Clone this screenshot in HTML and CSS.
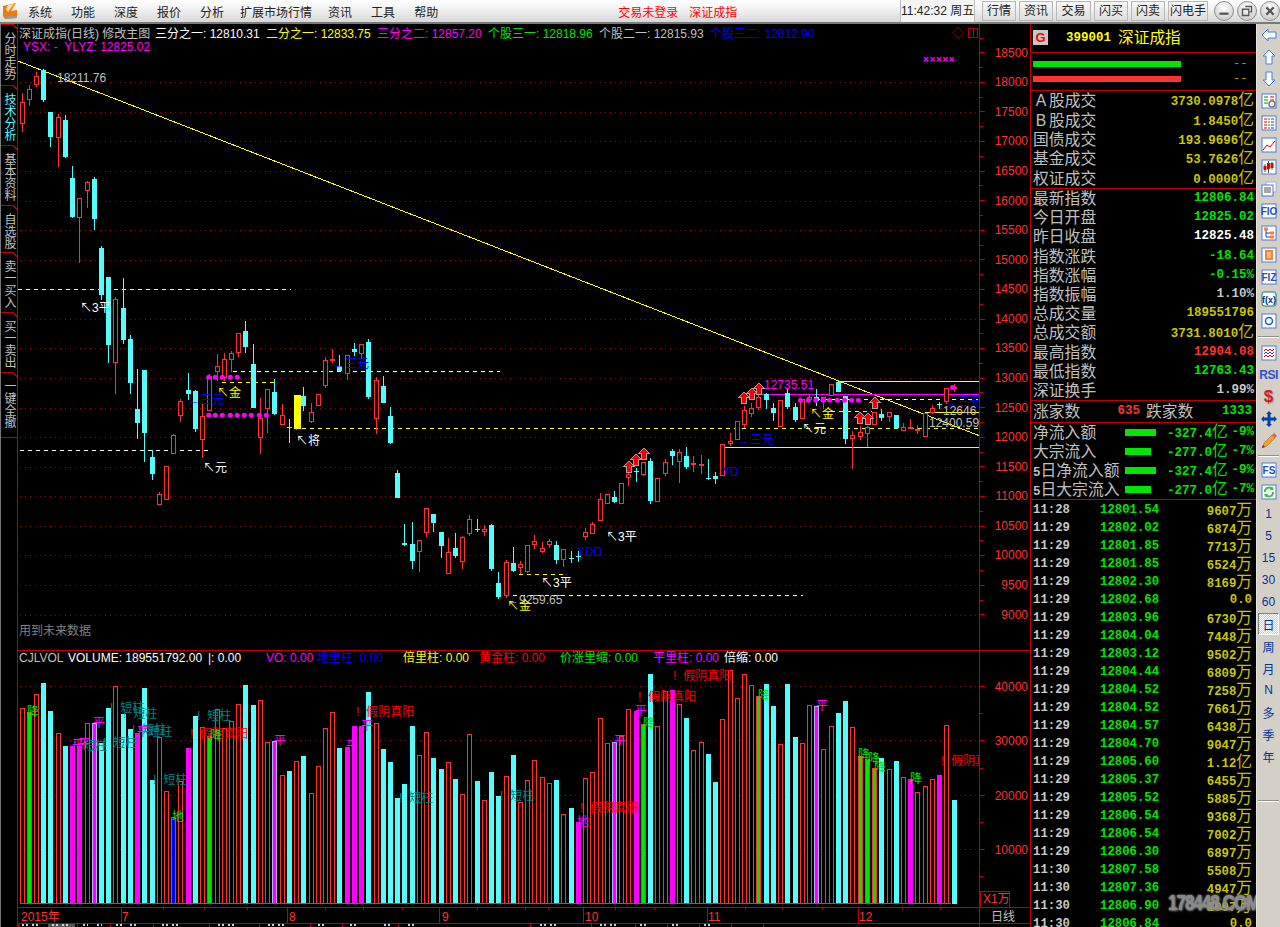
FILE: index.html
```html
<!DOCTYPE html>
<html lang="zh-CN">
<head>
<meta charset="utf-8">
<title>深证成指</title>
<link rel="stylesheet" href="styles.css">
</head>
<body>
<div class="app">
  <header class="topbar">
    <svg class="logo" viewBox="0 0 16 18"><path class="logo-o" d="M1 4 L14 1 L9 9 L15 8 L15 16 L3 17 L1 14 Z"/><path class="logo-w" d="M6 3 L12 2 L6 10 L4 7 Z"/><path class="logo-g" d="M3 17 L15 16 L15 14 L5 14 Z"/></svg>
    <nav class="menu">
      <span>系统</span><span>功能</span><span>深度</span><span>报价</span><span>分析</span><span class="wide">扩展市场行情</span><span>资讯</span><span>工具</span><span>帮助</span>
    </nav>
    <span class="login">交易未登录</span>
    <span class="login second">深证成指</span>
    <div class="topright">
      <span class="clock">11:42:32 周五</span>
      <span class="tbtn w34">行情</span><span class="tbtn w34">资讯</span><span class="tbtn w35">交易</span><span class="tbtn w34">闪买</span><span class="tbtn w34">闪卖</span><span class="tbtn w41">闪电手</span>
      <span class="winbtn"><svg viewBox="0 0 20 20"><path class="wb-i" d="M5 13 H15"/></svg></span>
      <span class="winbtn"><svg viewBox="0 0 20 20"><path class="wb-t" d="M8 5 H15 V11 H13 M5 8 H12 V15 H5 Z"/></svg></span>
      <span class="winbtn"><svg viewBox="0 0 20 20"><path class="wb-i" d="M6 6 L14 14 M14 6 L6 14"/></svg></span>
    </div>
  </header>

  <main class="main">
    <aside class="tabs">
      <div class="tab h61">分时走势</div>
      <div class="tab h60 active">技术分析</div>
      <div class="tab h60">基本资料</div>
      <div class="tab h47">自选股</div>
      <div class="tab h60">卖一买入</div>
      <div class="tab h60">买一卖出</div>
      <div class="tab h66">一键全撤</div>
    </aside>

    <section class="chart">
      <svg class="chart-svg" viewBox="18 23 1012 904" width="1012" height="904">
        <g id="grid"></g>
        <path class="trend" d="M18 60 L980 435"/>
        <path class="dash white" d="M20 449 H212 M233 370.5 H500 M497 594 H803 M800 398.5 H978"/>
        <path class="dash paleyellow" d="M18 288 H291"/>
        <path class="dash yellow" d="M222 381 H276 M302 427.5 H978 M519 573.5 H566 M831 410.5 H872"/>
        <path class="solid-y" d="M838 380.5 H979 M722 446.5 H979 M925 411.5 H979"/>
        <path class="solid-m" d="M760 393.5 H979"/>
        <g id="candles"></g>
        <g class="dots">
          <circle cx="208.7" cy="376.3" r="2.5"/><circle cx="215.3" cy="376.3" r="2.5"/><circle cx="222.3" cy="376.3" r="2.5"/><circle cx="230.3" cy="376.3" r="2.5"/><circle cx="237.3" cy="376.3" r="2.5"/>
          <circle cx="208.7" cy="414.3" r="2.5"/><circle cx="215.3" cy="414.3" r="2.5"/><circle cx="222.3" cy="414.3" r="2.5"/><circle cx="230.3" cy="414.3" r="2.5"/><circle cx="237.3" cy="414.3" r="2.5"/><circle cx="244.3" cy="414.3" r="2.5"/><circle cx="251.3" cy="414.3" r="2.5"/><circle cx="259.3" cy="414.3" r="2.5"/><circle cx="266.3" cy="414.3" r="2.5"/>
          <circle cx="800.5" cy="399.3" r="2.5"/><circle cx="808.3" cy="399.3" r="2.5"/><circle cx="815.8" cy="399.3" r="2.5"/><circle cx="822.9" cy="399.3" r="2.5"/><circle cx="829.6" cy="399.3" r="2.5"/><circle cx="837.4" cy="399.3" r="2.5"/><circle cx="844.5" cy="399.3" r="2.5"/><circle cx="851.6" cy="399.3" r="2.5"/><circle cx="858.4" cy="399.3" r="2.5"/>
          <circle cx="952.5" cy="386.5" r="2.5"/>
        </g>
        <defs><path id="up" d="M0 -6 L5 -1 L2.5 -1 L2.5 5 L-2.5 5 L-2.5 -1 L-5 -1 Z"/></defs>
        <g class="uparrows">
          <use href="#up" x="629" y="466"/><use href="#up" x="636" y="459"/><use href="#up" x="644" y="453"/>
          <use href="#up" x="744" y="397"/><use href="#up" x="752" y="393"/><use href="#up" x="759" y="388"/>
          <use href="#up" x="860" y="417"/><use href="#up" x="868" y="418"/><use href="#up" x="875" y="402"/>
        </g>

        <g class="t">
          <text class="gray" x="19" y="37">深证成指(日线) 修改主图</text>
          <text class="white" x="155" y="37">三分之一: 12810.31</text>
          <text class="yel" x="266" y="37">二分之一: 12833.75</text>
          <text class="mag" x="377" y="37">三分之二: 12857.20</text>
          <text class="grn" x="488" y="37">个股三一: 12818.96</text>
          <text class="gray" x="599" y="37">个股二一: 12815.93</text>
          <text class="blu" x="710" y="37">个股三二: 12812.90</text>
          <text class="mag" x="23" y="50">YSX: -&#160;&#160;YLYZ: 12825.02</text>
          <text class="mag small" x="923" y="62">×××××</text>
          <text class="redline" x="952" y="37">◇</text>
          <text class="gray" x="57" y="81">18211.76</text>
          <text class="white" x="80" y="311">↖3平</text>
          <text class="white" x="203" y="471">↖元</text>
          <text class="white" x="296" y="444">↖将</text>
          <text class="yel" x="217" y="396">↖金</text>
          <text class="blu" x="188" y="403">←三元</text>
          <text class="blu" x="333" y="367">←三元</text>
          <text class="white" x="606" y="540">↖3平</text>
          <text class="white" x="541" y="586">↖3平</text>
          <text class="blu" x="577" y="555">YDD</text>
          <text class="blu" x="722" y="475">YD</text>
          <text class="blu" x="738" y="443">←三元</text>
          <text class="mag" x="764" y="388">12735.51</text>
          <text class="yel" x="810" y="417">↖金</text>
          <text class="white" x="802" y="432">↖元</text>
          <text class="blu" x="946" y="405">←三元</text>
          <text class="gray" x="943" y="414">12646</text>
          <text class="gray" x="929" y="426">12400.59</text>
          <text class="gray" x="507" y="603">←9259.65</text>
          <text class="yel" x="507" y="609">↖金</text>
          <text class="dim" x="19" y="634">用到未来数据</text>

          <text class="gray" x="19" y="661">CJLVOL</text>
          <text class="white" x="68" y="661">VOLUME: 189551792.00</text>
          <text class="white" x="208" y="661">|: 0.00</text>
          <text class="mag" x="266" y="661">VO: 0.00</text>
          <text class="blu" x="317" y="661">地里柱: 0.00</text>
          <text class="yel" x="403" y="661">倍里柱: 0.00</text>
          <text class="redt" x="479" y="661">黄金柱: 0.00</text>
          <text class="grn" x="560" y="661">价涨里缩: 0.00</text>
          <text class="mag" x="653" y="661">平里柱: 0.00</text>
          <text class="white" x="724" y="661">倍缩: 0.00</text>
        </g>

        <g id="vol"></g>
        <path class="baseline" d="M20 902.5 H951"/>

        <g class="t vl">
          <text class="teal" x="110" y="711">! 短柱</text><text class="teal" x="123" y="717">! 短柱</text><text class="teal" x="73" y="749">! 短柱</text><text class="teal" x="103" y="746">! 短柱</text><text class="teal" x="132" y="733">! 短柱</text><text class="teal" x="138" y="735">! 短柱</text><text class="teal" x="153" y="783">! 短柱</text><text class="teal" x="197" y="719">! 短柱</text><text class="teal" x="399" y="801">! 短柱</text><text class="teal" x="500" y="799">! 短柱</text>
          <text class="redb" x="190" y="737">! 假阴真阳</text><text class="redb" x="356" y="715">! 假阴真阳</text><text class="redb" x="673" y="679">! 假阴真阳</text><text class="redb" x="638" y="700">! 假阴真阳</text><text class="redb" x="580" y="811">! 假阴真阳</text><text class="redb" x="941" y="764">! 假阴真阳</text>
          <text class="grn mid" x="33" y="715">降</text><text class="grn mid" x="216" y="739">降</text><text class="grn mid" x="649" y="727">降</text><text class="grn mid" x="764" y="699">降</text><text class="grn mid" x="864" y="758">降</text><text class="grn mid" x="874" y="762">降</text><text class="grn mid" x="880" y="771">降</text><text class="grn mid" x="916" y="782">降</text>
          <text class="mag mid" x="99" y="726">平</text><text class="mag mid" x="78" y="748">平</text><text class="mag mid" x="84" y="747">平</text><text class="mag mid" x="143" y="735">平</text><text class="mag mid" x="280" y="744">平</text><text class="mag mid" x="367" y="729">平</text><text class="mag mid" x="352" y="749">平</text><text class="mag mid" x="641" y="714">平</text><text class="mag mid" x="620" y="744">平</text><text class="mag mid" x="822" y="709">平</text>
          <text class="mag mid" x="583" y="825">地</text><text class="grn mid" x="178" y="820">地</text>
        </g>

        <rect class="axisbg" x="980" y="23" width="50" height="904"/>
        <g id="axis"></g>
        <path class="frame" d="M979.5 23 V927 M18 649.5 H1030 M18 906.5 H1030 M18 922.5 H1030 M121.5 906 V923 M287.5 906 V923 M439.5 906 V923 M583.5 906 V923 M707.5 906 V923 M858.5 906 V923"/>
        <rect class="xbox" x="980.5" y="890.5" width="29" height="16"/>
        <rect class="framebox" x="968.5" y="27.5" width="9" height="9"/>
        <path class="framebox" d="M973 28 V36"/>

        <g class="t axis-labels">
          <text x="1028" y="56">18500</text><text x="1028" y="85">18000</text><text x="1028" y="115">17500</text><text x="1028" y="144">17000</text><text x="1028" y="174">16500</text><text x="1028" y="204">16000</text><text x="1028" y="233">15500</text><text x="1028" y="263">15000</text><text x="1028" y="292">14500</text><text x="1028" y="322">14000</text><text x="1028" y="351">13500</text><text x="1028" y="381">13000</text><text x="1028" y="411">12500</text><text x="1028" y="440">12000</text><text x="1028" y="470">11500</text><text x="1028" y="499">11000</text><text x="1028" y="529">10500</text><text x="1028" y="558">10000</text><text x="1028" y="588">9500</text><text x="1028" y="618">9000</text>
          <text x="1028" y="690">40000</text><text x="1028" y="744">30000</text><text x="1028" y="799">20000</text><text x="1028" y="853">10000</text>
        </g>
        <g class="t xlabels">
          <text x="21" y="920">2015年</text><text x="122" y="920">7</text><text x="289" y="920">8</text><text x="442" y="920">9</text><text x="585" y="920">10</text><text x="708" y="920">11</text><text x="859" y="920">12</text>
          <text x="983" y="902">X1万</text>
        </g>
        <text class="t gray rx" x="991" y="920">日线</text>
        <g class="strip">
          <rect class="strip-on" x="48" y="923" width="27" height="4"/>
          <path class="frame" d="M18.5 923 V927 M77.5 923 V927 M110.5 923 V927 M153.5 923 V927 M209.5 923 V927 M259.5 923 V927 M310.5 923 V927 M342.5 923 V927 M398.5 923 V927 M530.5 923 V927 M591.5 923 V927 M635.5 923 V927 M667.5 923 V927 M699.5 923 V927 M731.5 923 V927 M763.5 923 V927"/>
          <path class="strip-txt" d="M22 924 H28 M32 924 H38 M52 924 H58 M62 924 H68 M83 924 H88 M97 924 H102 M116 924 H124 M130 924 H136 M162 924 H168 M172 924 H178 M218 924 H224 M228 924 H234 M268 924 H274 M278 924 H284 M318 924 H324 M350 924 H356 M384 924 H390 M408 924 H414 M540 924 H546 M550 924 H556 M600 924 H606 M610 924 H616 M640 924 H646 M672 924 H678 M704 924 H710"/>
        </g>
      </svg>
    </section>

    <aside class="panel">
      <div class="p-head sec">
        <span class="g-badge">G</span>
        <span class="code">399001</span>
        <span class="name">深证成指</span>
      </div>
      <div class="p-bars sec">
        <div class="bar-row"><i class="bar green"></i><span class="dd">--</span></div>
        <div class="bar-row"><i class="bar red"></i><span class="dd">--</span></div>
      </div>
      <div class="rows rows5 sec">
        <div class="row"><span class="lb"><span class="lat">A</span>股成交</span><span class="v ol">3730.0978<b>亿</b></span></div>
        <div class="row"><span class="lb"><span class="lat">B</span>股成交</span><span class="v ol">1.8450<b>亿</b></span></div>
        <div class="row"><span class="lb">国债成交</span><span class="v ol">193.9696<b>亿</b></span></div>
        <div class="row"><span class="lb">基金成交</span><span class="v ol">53.7626<b>亿</b></span></div>
        <div class="row"><span class="lb">权证成交</span><span class="v ol">0.0000<b>亿</b></span></div>
      </div>
      <div class="rows rows11 sec">
        <div class="row"><span class="lb">最新指数</span><span class="v gr">12806.84</span></div>
        <div class="row"><span class="lb">今日开盘</span><span class="v gr">12825.02</span></div>
        <div class="row"><span class="lb">昨日收盘</span><span class="v wh">12825.48</span></div>
        <div class="row"><span class="lb">指数涨跌</span><span class="v gr">-18.64</span></div>
        <div class="row"><span class="lb">指数涨幅</span><span class="v gr">-0.15%</span></div>
        <div class="row"><span class="lb">指数振幅</span><span class="v ltg">1.10%</span></div>
        <div class="row"><span class="lb">总成交量</span><span class="v ol">189551796</span></div>
        <div class="row"><span class="lb">总成交额</span><span class="v ol">3731.8010<b>亿</b></span></div>
        <div class="row"><span class="lb">最高指数</span><span class="v rd">12904.08</span></div>
        <div class="row"><span class="lb">最低指数</span><span class="v gr">12763.43</span></div>
        <div class="row"><span class="lb">深证换手</span><span class="v ltg">1.99%</span></div>
      </div>
      <div class="updown sec">
        <span class="lb">涨家数</span><span class="v rd">635</span><span class="lb lbr">跌家数</span><span class="v gr">1333</span>
      </div>
      <div class="flows sec">
        <div class="flow"><span class="lb">净流入额</span><i class="fbar f31"></i><span class="v gr">-327.4<b>亿</b></span><span class="v gr">-9%</span></div>
        <div class="flow"><span class="lb">大宗流入</span><i class="fbar f26"></i><span class="v gr">-277.0<b>亿</b></span><span class="v gr">-7%</span></div>
        <div class="flow"><span class="lb"><em>5</em>日净流入额</span><i class="fbar f31"></i><span class="v gr">-327.4<b>亿</b></span><span class="v gr">-9%</span></div>
        <div class="flow"><span class="lb"><em>5</em>日大宗流入</span><i class="fbar f26"></i><span class="v gr">-277.0<b>亿</b></span><span class="v gr">-7%</span></div>
      </div>
      <div class="ticks">
        <div class="tk"><span>11:28</span><span class="gr">12801.54</span><span class="ol">9607<b>万</b></span></div>
        <div class="tk"><span>11:29</span><span class="gr">12802.02</span><span class="ol">6874<b>万</b></span></div>
        <div class="tk"><span>11:29</span><span class="gr">12801.85</span><span class="ol">7713<b>万</b></span></div>
        <div class="tk"><span>11:29</span><span class="gr">12801.85</span><span class="ol">6524<b>万</b></span></div>
        <div class="tk"><span>11:29</span><span class="gr">12802.30</span><span class="ol">8169<b>万</b></span></div>
        <div class="tk"><span>11:29</span><span class="gr">12802.68</span><span class="ol">0.0</span></div>
        <div class="tk"><span>11:29</span><span class="gr">12803.96</span><span class="ol">6730<b>万</b></span></div>
        <div class="tk"><span>11:29</span><span class="gr">12804.04</span><span class="ol">7448<b>万</b></span></div>
        <div class="tk"><span>11:29</span><span class="gr">12803.12</span><span class="ol">9502<b>万</b></span></div>
        <div class="tk"><span>11:29</span><span class="gr">12804.44</span><span class="ol">6809<b>万</b></span></div>
        <div class="tk"><span>11:29</span><span class="gr">12804.52</span><span class="ol">7258<b>万</b></span></div>
        <div class="tk"><span>11:29</span><span class="gr">12804.52</span><span class="ol">7661<b>万</b></span></div>
        <div class="tk"><span>11:29</span><span class="gr">12804.57</span><span class="ol">6438<b>万</b></span></div>
        <div class="tk"><span>11:29</span><span class="gr">12804.70</span><span class="ol">9047<b>万</b></span></div>
        <div class="tk"><span>11:29</span><span class="gr">12805.60</span><span class="ol">1.12<b>亿</b></span></div>
        <div class="tk"><span>11:29</span><span class="gr">12805.37</span><span class="ol">6455<b>万</b></span></div>
        <div class="tk"><span>11:29</span><span class="gr">12805.52</span><span class="ol">5885<b>万</b></span></div>
        <div class="tk"><span>11:29</span><span class="gr">12806.54</span><span class="ol">9368<b>万</b></span></div>
        <div class="tk"><span>11:29</span><span class="gr">12806.54</span><span class="ol">7002<b>万</b></span></div>
        <div class="tk"><span>11:29</span><span class="gr">12806.30</span><span class="ol">6897<b>万</b></span></div>
        <div class="tk"><span>11:30</span><span class="gr">12807.58</span><span class="ol">5508<b>万</b></span></div>
        <div class="tk"><span>11:30</span><span class="gr">12807.36</span><span class="ol">4947<b>万</b></span></div>
        <div class="tk"><span>11:30</span><span class="gr">12806.90</span><span class="ol">1097<b>万</b></span></div>
        <div class="tk"><span>11:30</span><span class="gr">12806.84</span><span class="ol">0.0</span></div>
      </div>
      <span class="watermark">178448.COM</span>
    </aside>

    <aside class="toolbar">
      <div class="ti"><svg viewBox="0 0 16 16"><path class="ar" d="M1 8 L7 2 V5 H15 V11 H7 V14 Z"/></svg></div>
      <div class="ti"><svg viewBox="0 0 16 16"><path class="ar" d="M8 1 L14 7 H11 V15 H5 V7 H2 Z"/></svg></div>
      <div class="ti"><svg viewBox="0 0 16 16"><path class="ar" d="M8 15 L14 9 H11 V1 H5 V9 H2 Z"/></svg></div>
      <div class="ti"><svg viewBox="0 0 16 16"><rect class="bx" x="1" y="1" width="14" height="14"/><path class="l-g" d="M3 4 H7 M3 7 H7 M3 10 H7"/><path class="l-r" d="M9 4 H13 M9 7 H13"/><circle class="chk" cx="11" cy="11" r="3"/></svg></div>
      <div class="ti"><svg viewBox="0 0 16 16"><rect class="bx" x="1" y="1" width="14" height="14"/><path class="l-r" d="M3 4 H6 M3 7 H6 M3 10 H6 M3 13 H6"/><path class="l-g" d="M7 4 H9 M7 7 H9 M7 10 H9 M7 13 H9"/><path class="l-b" d="M10 4 H13 M10 7 H13 M10 10 H13 M10 13 H13"/></svg></div>
      <div class="ti"><svg viewBox="0 0 16 16"><rect class="bx" x="1" y="1" width="14" height="14"/><path class="l-r" d="M2 13 L6 8 L9 10 L14 4"/></svg></div>
      <div class="ti"><svg viewBox="0 0 16 16"><rect class="bx" x="1" y="1" width="14" height="14"/><path class="l-g" d="M4 5 V13 M11 3 V11"/><rect class="rd-f" x="2.5" y="7" width="3" height="4"/><path class="l-k" d="M7.5 2 V14"/><rect class="rd-f" x="6" y="4" width="3" height="6"/><rect class="rd-f" x="9.5" y="4" width="3" height="5"/></svg></div>
      <div class="ti"><svg viewBox="0 0 16 16"><rect class="bx pale" x="5" y="1" width="10" height="10"/><rect class="bx" x="1" y="4" width="11" height="11"/><path class="l-k" d="M3 7 H10 M3 9 H10 M3 11 H10"/></svg></div>
      <div class="ti"><svg viewBox="0 0 16 16"><rect class="bx" x="1" y="1" width="14" height="14"/><text class="ic" x="8" y="12">FIO</text></svg></div>
      <div class="ti"><svg viewBox="0 0 16 16"><rect class="bx" x="1" y="1" width="14" height="14"/><path class="l-b" d="M5 4 V12 H9 M5 8 H9"/><rect class="or-f" x="3" y="2.500" width="4" height="3"/><rect class="or-f" x="9" y="6.500" width="4" height="3"/><rect class="or-f" x="9" y="10.500" width="4" height="3"/></svg></div>
      <div class="ti"><svg viewBox="0 0 16 16"><rect class="bx" x="1" y="1" width="14" height="14"/><rect class="or-f" x="4" y="3" width="8" height="10"/><path class="l-w" d="M6 6 H10 M6 8 H10 M6 10 H10"/></svg></div>
      <div class="ti"><svg viewBox="0 0 16 16"><rect class="bx" x="1" y="1" width="14" height="14"/><text class="ic" x="8" y="12">FIZ</text></svg></div>
      <div class="ti"><svg viewBox="0 0 16 16"><rect class="bx tealb" x="1" y="1" width="14" height="14" rx="2"/><text class="ic nav" x="8" y="12">f(x)</text></svg></div>
      <div class="ti"><svg viewBox="0 0 16 16"><rect class="bx" x="1" y="1" width="14" height="14"/><circle class="ring" cx="8" cy="8" r="3.500"/></svg></div>
      <div class="tsep s10"></div>
      <div class="ti"><svg viewBox="0 0 16 16"><rect class="bx" x="1" y="1" width="14" height="14"/><path class="l-r" d="M3 6 L5 4 L7 6 L9 4 L11 6 L13 4"/><path class="l-b" d="M3 9 L5 7 L7 9 L9 7 L11 9 L13 7"/><path class="l-r" d="M3 12 L5 10 L7 12 L9 10 L11 12 L13 10"/></svg></div>
      <div class="ti rsi">RSI</div>
      <div class="ti dollar">$</div>
      <div class="ti"><svg viewBox="0 0 16 16"><path class="nv-f" d="M8 0 L11 3 H9.500 V6.500 H13 V5 L16 8 L13 11 V9.500 H9.500 V13 H11 L8 16 L5 13 H6.500 V9.500 H3 V11 L0 8 L3 5 V6.500 H6.500 V3 H5 Z"/></svg></div>
      <div class="ti"><svg viewBox="0 0 16 16"><path class="pen" d="M1 15 L3 10 L11 2 L14 5 L6 13 Z"/><path class="pen-t" d="M11 2 L13 0 L16 3 L14 5 Z"/><path class="pen-k" d="M1 15 L2 12 L4 14 Z"/></svg></div>
      <div class="tsep s7"></div>
      <div class="ti"><svg viewBox="0 0 16 16"><rect class="bx" x="1" y="1" width="14" height="14"/><text class="ic" x="8" y="12">FS</text></svg></div>
      <div class="ti"><svg viewBox="0 0 16 16"><rect class="bx" x="1" y="1" width="14" height="14"/><path class="rf" d="M4 8 A4 4 0 0 1 11 5 M12 8 A4 4 0 0 1 5 11"/><path class="rf-h" d="M11 2 L13 6 L9 6 Z M5 14 L3 10 L7 10 Z"/></svg></div>
      <div class="ti per">1</div><div class="ti per">5</div><div class="ti per">15</div><div class="ti per">30</div><div class="ti per">60</div>
      <div class="ti per sel">日</div><div class="ti per">周</div><div class="ti per">月</div><div class="ti per">N</div><div class="ti per">多</div><div class="ti per">季</div><div class="ti per">年</div>
      <div class="tsep last"></div>
    </aside>
  </main>
</div>
<script src="chart.js"></script>
</body>
</html>
```
FILE: styles.css
```css
html, body { margin: 0; padding: 0; background: #000; overflow: hidden; }
.app { width: 1280px; height: 927px; display: flex; flex-direction: column; overflow: hidden; font-family: "Liberation Sans", "Noto Sans CJK SC", sans-serif; font-size: 12px; }

/* top bar */
.topbar { height: 22px; flex: none; display: flex; align-items: center; background: linear-gradient(#ffffff, #f2f2f2 40%, #d8d8d8); border-bottom: 2px solid #7a7a7a; color: #222; }
.logo { width: 16px; height: 18px; margin-left: 2px; flex: none; }
.logo-o { fill: #ee7a10; }
.logo-w { fill: #ffe0a0; }
.logo-g { fill: #9a9a9a; }
.menu { display: flex; gap: 19px; margin-left: 10px; }
.menu .wide { margin: 0 -3px; }
.login { color: #f00; margin-left: 180px; }
.login.second { margin-left: 11px; }
.topright { margin-left: auto; display: flex; align-items: center; height: 22px; }
.clock { width: 73px; text-align: center; border-left: 1px solid #bbb; border-right: 1px solid #bbb; height: 22px; line-height: 22px; margin-right: 7px; background: #f4f4f4; white-space: nowrap; }
.tbtn { box-sizing: border-box; height: 20px; line-height: 19px; margin-right: 3px; text-align: center; background: linear-gradient(#f8f8f8, #dcdcdc); border: 1px solid #b8b8b8; }
.w34 { width: 34px; } .w35 { width: 35px; } .w41 { width: 40px; }
.winbtn { width: 20px; height: 20px; border-radius: 50%; margin-left: 3px; box-sizing: border-box; border: 1px solid #909090; background: radial-gradient(circle at 50% 30%, #fff, #c0c0c0); flex: none; }
.winbtn svg { display: block; width: 18px; height: 18px; }
.wb-i { stroke: #555; stroke-width: 2.5; fill: none; }
.wb-t { stroke: #555; stroke-width: 1.5; fill: none; }

.main { flex: 1; display: flex; min-height: 0; background: #000; }

/* left tabs */
.tabs { width: 16px; flex: none; display: flex; flex-direction: column; border-left: 1px solid #777; border-right: 1px solid #c00000; }
.tab { position: relative; box-sizing: border-box; border-top: 1px solid #c00000; writing-mode: vertical-rl; text-orientation: upright; color: #c0c0c0; text-align: start; line-height: 16px; letter-spacing: 0; padding-top: 7px; white-space: nowrap; }
.tab::before { content: ""; position: absolute; top: -1px; right: 0; width: 5px; height: 5px; background: linear-gradient(to top right, transparent 42%, #c00000 42% 62%, #000 62%); }
.tab.active { color: #54fcfc; }
.h61 { height: 61px; } .h60 { height: 60px; } .h47 { height: 47px; } .h66 { height: 66px; border-bottom: 1px solid #c00000; }

/* chart */
.chart { width: 1012px; flex: none; }
.chart-svg { display: block; }
.chart-svg path, .chart-svg rect, .chart-svg line { shape-rendering: crispEdges; }
.grid-line { stroke: #a00000; stroke-width: 1; stroke-dasharray: 1 4; fill: none; }
.trend { stroke: #ffff00; stroke-width: 1; fill: none; }
.dash { stroke-width: 1; stroke-dasharray: 4 4; fill: none; }
.dash.white { stroke: #fff; }
.dash.yellow { stroke: #ffff00; }
.dash.paleyellow { stroke: #ffff70; }
.solid-y { stroke: #ffff00; stroke-width: 1; fill: none; }
.solid-m { stroke: #ff00ff; stroke-width: 1; fill: none; }
.dots circle { fill: #ff00ff; }
.uparrows use { fill: #f00000; stroke: #b0a0a0; stroke-width: 1; }
.c-r { fill: #000; stroke: #ff3232; stroke-width: 1; }
.w-r { fill: #ff3232; }
.c-c { fill: #54fcfc; }
.w-c { fill: #54fcfc; }
.c-y { fill: #ffff00; }
.w-y { fill: #ff3232; }
.v-r { fill: #000; stroke: #ff3232; stroke-width: 1; }
.v-c { fill: #54fcfc; }
.v-m { fill: #ff00ff; }
.v-g { fill: #00e600; stroke: #ff3232; stroke-width: 1; }
.v-p { fill: #ff00ff; stroke: #b0b0ff; stroke-width: 1; }
.v-b { fill: #0000ff; stroke: #ff3232; stroke-width: 1; }
.baseline { stroke: #ff00ff; stroke-width: 1; fill: none; }
.t text, .t { font-family: "Liberation Sans", "Noto Sans CJK SC", "DejaVu Sans", sans-serif; font-size: 12px; }
.gray { fill: #c0c0c0; } .white { fill: #fff; } .yel { fill: #ffff00; } .mag { fill: #ff00ff; } .grn { fill: #00e600; } .blu { fill: #0000ff; } .redt { fill: #ff0000; } .dim { fill: #808080; } .redline { fill: #c00000; }
.teal { fill: #008484; word-spacing: 3.5px; } .redb { fill: #ff0000; word-spacing: 3.5px; }
.mid { text-anchor: middle; }
.t .small { font-size: 10px; font-weight: bold; letter-spacing: 0.6px; }
.axisbg { fill: #000; }
.frame { stroke: #c00000; stroke-width: 1; fill: none; }
.tick { stroke: #c00000; stroke-width: 1; fill: none; }
.xbox { stroke: #c00000; fill: #000; }
.framebox { stroke: #c00000; fill: none; }
.axis-labels text { fill: #ff3232; text-anchor: end; }
.xlabels text { fill: #ff3232; }
.strip-on { fill: #555; }
.strip-txt { stroke: #d0d0d0; stroke-width: 2; stroke-dasharray: 2 2; fill: none; }

/* right panel */
.panel { position: relative; width: 225px; flex: none; border-left: 1px solid #c00000; color: #c0c0c0; display: flex; flex-direction: column; overflow: hidden; }
.sec { border-bottom: 1px solid #c00000; flex: none; box-sizing: border-box; }
.p-head { height: 29px; display: flex; align-items: center; padding-left: 2px; }
.g-badge { width: 15px; height: 15px; background: #c8c8c8; color: #f00; font: bold 13px/15px "Liberation Sans", sans-serif; text-align: center; margin-top: -1px; }
.code { color: #ffff00; font: bold 12.500px/16px "Liberation Mono", monospace; margin-left: 18px; }
.name { color: #ffff00; font-size: 15.700px; line-height: 18px; margin-left: 7px; }
.p-bars { height: 38px; padding: 8px 0 0 2px; display: flex; flex-direction: column; gap: 9px; }
.bar-row { height: 6px; display: flex; align-items: center; }
.bar { display: block; width: 148px; height: 6px; }
.bar.green { background: #00e600; } .bar.red { background: #ff3232; }
.dd { margin-left: 52px; color: #a0a000; font: 12px/6px "Liberation Mono", monospace; }
.rows { display: grid; padding: 0 2px 0 2px; }
.rows5 { height: 98px; grid-template-rows: repeat(5, minmax(0, 1fr)); }
.rows11 { height: 212px; grid-template-rows: repeat(11, minmax(0, 1fr)); }
.row { display: flex; justify-content: space-between; align-items: center; min-height: 0; }
.lb { font-size: 15.800px; line-height: 19px; height: 19px; color: #c0c0c0; white-space: nowrap; }
.lat { display: inline-block; width: 16px; text-align: center; }
.v { font: bold 12.500px/19px "Liberation Mono", monospace; height: 19px; white-space: nowrap; }
.v b, .ticks b { font: 15.700px/16px "Noto Sans CJK SC", sans-serif; }
.ol { color: #c8c800; } .gr { color: #00e600; } .wh { color: #fff; } .rd { color: #ff3232; } .ltg { color: #c8c8c8; }
.updown { height: 22px; display: grid; grid-template-columns: 47px 60px 53px 59px; align-items: center; padding-left: 2px; }
.updown .v { text-align: right; }
.lbr { padding-left: 6px; }
.flows { height: 77px; display: grid; grid-template-rows: repeat(4, minmax(0, 1fr)); padding-left: 2px; }
.flow { display: grid; grid-template-columns: 92px 42px 55px 32px; align-items: center; min-height: 0; }
.flow em { font: bold 12.500px/19px "Liberation Mono", monospace; }
.flow .v { text-align: right; }
.fbar { display: block; height: 7px; background: #00e600; }
.f31 { width: 31px; } .f26 { width: 26px; }
.ticks { padding: 1px 4px 0 2px; }
.tk { height: 18px; display: grid; grid-template-columns: 67px 60px 1fr; grid-template-rows: 18px; align-items: center; font: bold 12.300px/18px "Liberation Mono", monospace; color: #c8c8c8; }
.tk span { height: 18px; }
.tk span:last-child { text-align: right; }
.watermark { position: absolute; left: 137px; top: 868px; font: bold 17px/22px "Liberation Sans", sans-serif; color: #8a8a8a; letter-spacing: -1px; transform: scaleY(1.3); text-shadow: 0 0 2px #b0b0b0, 1px 1px 2px #666; white-space: nowrap; }

/* right toolbar */
.toolbar { width: 24px; flex: none; background: #d4d0c8; display: flex; flex-direction: column; border-left: 1px solid #e8e6e0; box-sizing: border-box; }
.ti { height: 22px; flex: none; display: flex; align-items: center; justify-content: center; }
.ti svg { width: 16px; height: 16px; display: block; }
.ar { fill: #fff; stroke: #3a80e8; stroke-width: 1; }
.bx { fill: #fff; stroke: #4a78d8; stroke-width: 1; }
.bx.pale { stroke: #90b0e8; }
.bx.tealb { stroke: #008080; }
.l-g, .l-r, .l-b, .l-k, .l-w { fill: none; stroke-width: 1; }
.l-g { stroke: #009000; } .l-r { stroke: #e00000; } .l-b { stroke: #2040c0; } .l-k { stroke: #505050; } .l-w { stroke: #fff; }
.chk { fill: #fff; stroke: #808080; stroke-width: 1.500; }
.rd-f { fill: #e00000; }
.or-f { fill: #ff8030; }
.ic { font: bold 10px "Liberation Sans", sans-serif; fill: #2050c0; text-anchor: middle; }
.ic.nav { fill: #003080; font-size: 9px; }
.ring { fill: none; stroke: #2060c0; stroke-width: 1.500; }
.rsi { font: bold 12px "Liberation Sans", sans-serif; color: #3050d0; letter-spacing: -0.500px; }
.dollar { font: bold 17px "Liberation Sans", sans-serif; color: #d02020; text-shadow: 1px 1px 1px #999; }
.nv-f { fill: #0040b0; }
.pen { fill: #f0a030; stroke: #a06010; stroke-width: 0.500; }
.pen-t { fill: #e06060; }
.pen-k { fill: #404040; }
.rf { fill: none; stroke: #40c040; stroke-width: 2; }
.rf-h { fill: #40c040; }
.tsep { flex: none; margin: 0 1px; box-sizing: content-box; background-clip: content-box; }
.s10 { height: 2px; margin-top: 4px; margin-bottom: 4px; background: linear-gradient(#909090 50%, #fff 50%); }
.s7 { height: 2px; margin-top: 3px; margin-bottom: 2px; background: linear-gradient(#909090 50%, #fff 50%); }
.last { height: 2px; margin-top: 33px; background: linear-gradient(#909090 50%, #fff 50%); }
.per { color: #003399; font-size: 12px; }
.sel { background: repeating-conic-gradient(#fff 0 25%, #d4d0c8 0 50%) 0 0 / 2px 2px; border: 1px solid #808080; border-right-color: #fff; border-bottom-color: #fff; box-sizing: border-box; margin: 0 1px; }
```
FILE: chart.js
```js
var NS = "http://www.w3.org/2000/svg";
function el(parent, tag, attrs) {
  var n = document.createElementNS(NS, tag);
  for (var k in attrs) n.setAttribute(k, attrs[k]);
  parent.appendChild(n);
  return n;
}
function xAt(i) { return Math.round(21.5 + 7.225 * i); }

/* kind high top bottom low, one candle per day */
var CANDLES = "r 92 101 123 131;r 84 88 99 105;r 71 75 84 86;c 68 69 99 101;c 111 111 136 146;r 113 116 137 166;c 114 119 156 157;c 165 177 216 217;r 197 197 217 262;r 180 181 190 207;c 176 178 218 229;c 245 247 294 299;c 276 276 344 362;r 296 298 362 393;c 277 307 339 343;c 334 338 382 393;c 368 408 422 438;c 369 369 432 461;c 449 456 473 479;r 491 493 504 504;r 465 465 499 499;r 433 434 453 453;r 398 400 415 421;c 372 389 393 399;c 389 390 428 431;r 403 415 439 457;r 373 375 410 410;r 353 365 371 380;r 352 358 377 380;r 350 352 359 371;r 332 332 352 356;c 320 330 346 352;c 343 363 407 407;r 397 417 437 453;r 388 388 408 432;c 378 391 413 414;r 403 414 424 424;c 418 426 427 442;y 394 394 428 429;c 386 395 405 410;r 402 411 421 422;r 393 393 405 405;r 356 359 385 387;r 348 358 359 362;c 354 365 370 371;r 354 354 373 379;c 342 348 351 355;r 343 343 353 358;c 338 341 396 398;r 376 379 418 433;c 375 385 402 402;c 406 415 442 443;c 469 472 497 497;c 523 542 544 545;c 521 543 560 568;r 539 539 551 571;r 507 507 532 536;c 513 513 522 531;c 531 531 545 557;r 537 551 573 573;c 532 547 555 557;r 535 536 561 568;r 514 518 533 535;c 518 528 529 531;r 524 528 531 535;c 523 524 568 570;c 571 582 596 598;r 559 561 595 597;c 546 562 570 571;r 560 563 567 573;r 544 544 571 572;r 534 540 544 548;r 541 547 551 552;r 538 540 544 547;c 540 544 559 563;r 548 548 559 566;c 550 557 558 562;c 550 555 556 561;r 527 531 536 539;r 521 523 533 533;r 492 498 520 520;r 493 493 503 503;c 490 496 501 502;r 482 482 503 503;r 472 473 477 485;c 467 470 471 481;r 461 461 474 475;c 457 460 500 503;r 477 477 501 501;r 458 461 473 475;c 448 450 455 464;r 448 451 461 482;c 446 455 466 468;r 455 462 463 471;r 454 463 464 473;c 458 477 478 479;c 471 475 478 483;r 443 443 475 475;r 432 440 443 445;r 420 420 439 439;r 405 409 424 427;r 402 407 413 416;r 392 396 407 409;c 392 393 399 408;c 402 407 412 420;r 399 399 426 426;c 387 392 406 408;c 402 406 419 421;r 398 398 418 418;r 393 396 399 401;c 388 396 400 405;r 396 396 401 408;r 383 383 395 395;c 381 381 391 391;c 395 395 438 443;r 430 434 438 468;r 425 431 436 439;r 425 426 433 446;r 411 411 424 424;c 408 413 417 420;r 411 411 416 421;c 414 414 427 428;r 422 426 430 430;r 418 426 427 427;r 424 428 429 433;r 412 412 436 436;r 404 407 412 413;c 401 403 404 408;r 387 387 401 403;r 383 386 388 391";

/* kind and top of the bar (in zoom rows, y = 640 + value / 3) */
var VOLUMES = "r202 g213 r160 c126 c210 r277 c316 m316 m316 r246 p246 c305 c201 r136 c218 c264 m275 c141 c417 r287 r451 b528 r420 m321 c225 r258 g285 r205 r262 r240 r190 c132 c192 r178 r304 p300 r403 c390 r361 c345 r457 r376 r262 r214 c321 m318 m255 m255 c153 r247 c324 c363 c471 c429 c255 r343 r274 c351 c384 r364 c414 r460 r280 c420 r477 c393 c465 r405 c342 r482 r418 r358 r408 r426 c417 r520 c501 m543 r411 r394 r232 r306 p303 r286 r205 m210 g249 c99 r255 r150 m147 r190 c231 r327 r304 c339 c423 r235 r88 r172 r100 r133 g165 c129 c195 r310 c129 c288 r306 r193 p195 r325 r256 c216 c180 r259 g345 g355 g381 c351 r385 c360 r409 m414 r454 r436 r415 m402 r253 c477";

var i, grid = document.getElementById("grid");
var prices = [81, 111, 140, 170, 200, 229, 259, 288, 318, 347, 377, 407, 436, 466, 495, 525, 554, 584, 614];
prices.forEach(function (y) { el(grid, "path", { "class": "grid-line", d: "M20 " + (y + 0.5) + " H979" }); });
[685, 739, 794, 848].forEach(function (y) { el(grid, "path", { "class": "grid-line", d: "M20 " + (y + 0.5) + " H979" }); });

var cg = document.getElementById("candles");
CANDLES.split(";").forEach(function (s, idx) {
  var p = s.split(" "), k = p[0], hi = +p[1], t = +p[2], b = +p[3], lo = +p[4], x = xAt(idx);
  el(cg, "rect", { "class": "w-" + k, x: x, y: hi, width: 1, height: Math.max(1, lo - hi) });
  if (k === "r") el(cg, "rect", { "class": "c-r", x: x - 1.5, y: t + 0.5, width: 4, height: Math.max(1, b - t - 1) });
  else el(cg, "rect", { "class": "c-" + k, x: x - 2, y: t, width: k === "y" ? 7 : 5, height: Math.max(1, b - t) });
});

var vg = document.getElementById("vol");
VOLUMES.split(" ").forEach(function (s, idx) {
  var k = s.charAt(0), top = Math.round(640 + (+s.slice(1)) / 3), x = xAt(idx);
  var stroked = k !== "c" && k !== "m";
  if (stroked) el(vg, "rect", { "class": "v-" + k, x: x - 1.5, y: top + 0.5, width: 4, height: 902 - top });
  else el(vg, "rect", { "class": "v-" + k, x: x - 2, y: top, width: 5, height: 903 - top });
});

var ax = document.getElementById("axis"), d = "";
for (i = 0; i <= 39; i++) {
  var yy = Math.round(36.5 + i * 14.79);
  if (yy < 640) d += "M980 " + (yy + 0.5) + " H" + (i % 2 ? 985 : 983);
}
[685, 712, 739, 767, 794, 821, 848, 875].forEach(function (y, n) {
  d += "M980 " + (y + 0.5) + " H" + (n % 2 ? 983 : 985);
});
[163, 204, 247, 325, 363, 402, 477, 525, 548, 615, 654, 745, 782, 822, 902, 940].forEach(function (x) {
  d += "M" + (x + 0.5) + " 906 V909";
});
el(ax, "path", { "class": "tick", d: d });
```
